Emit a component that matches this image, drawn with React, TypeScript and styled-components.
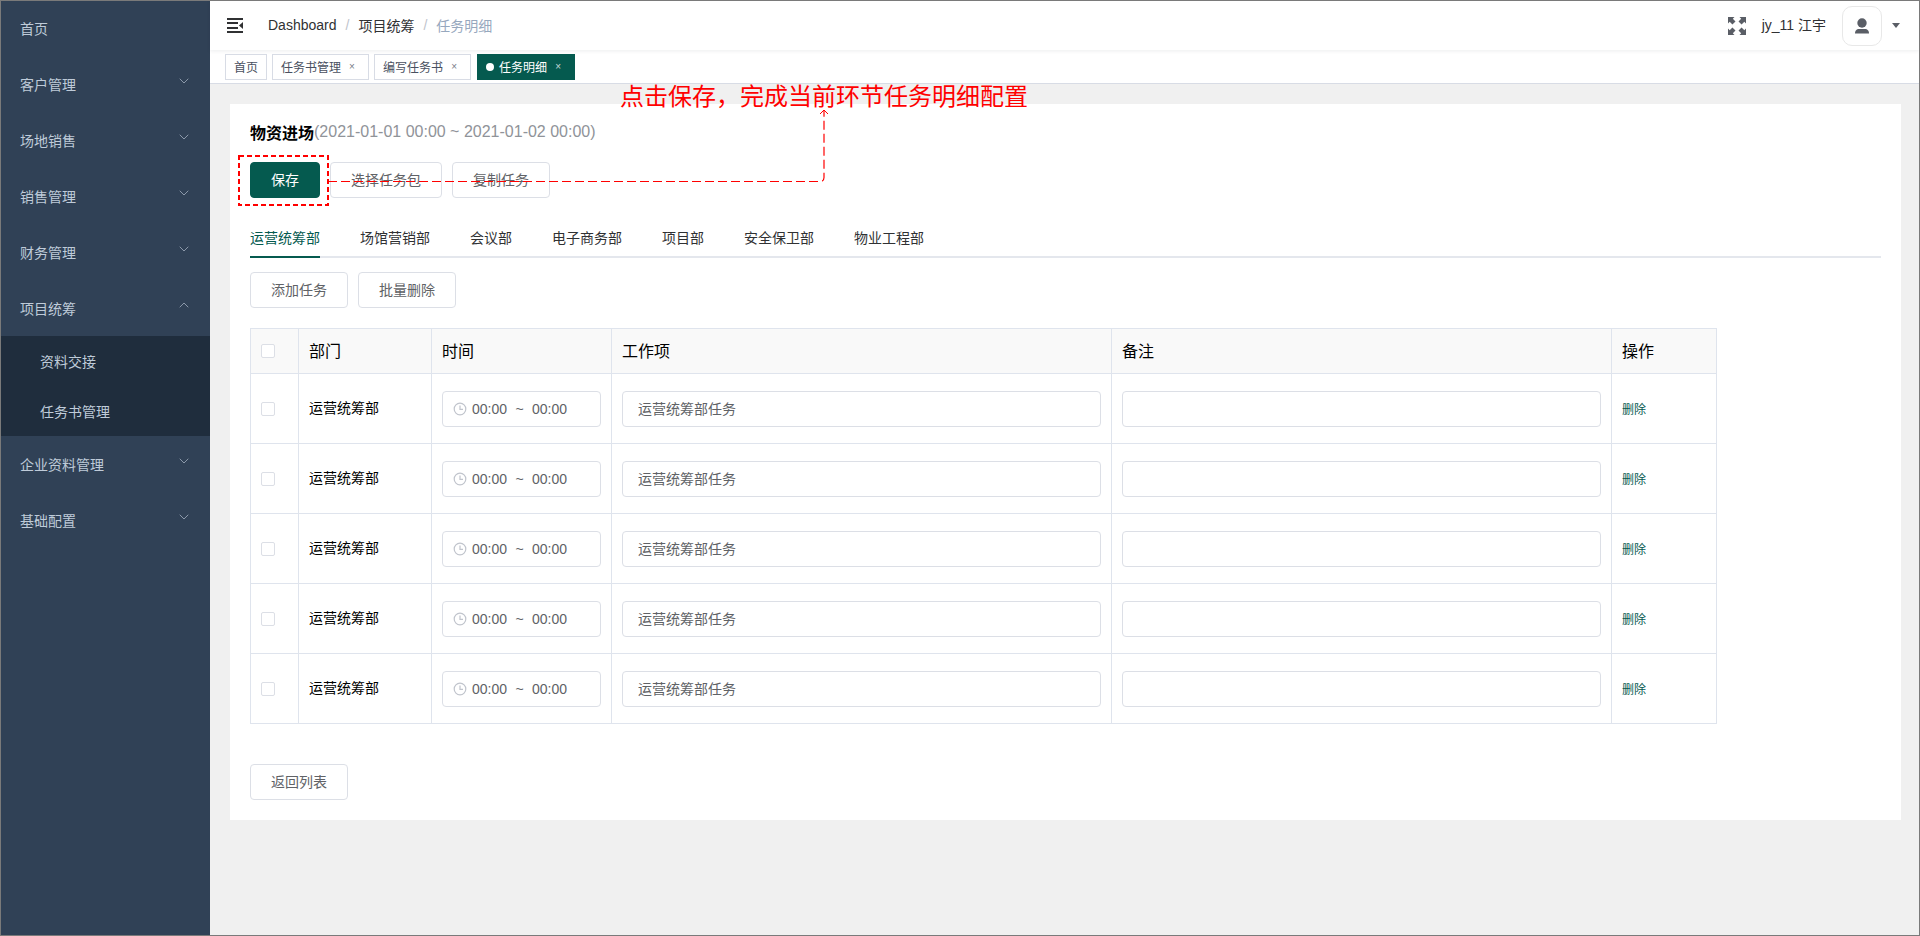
import styled, { createGlobalStyle } from 'styled-components';
import { ChevronDown, ChevronUp } from 'lucide-react';

const GREEN = '#055a4f';
const LINE = '#dfe4ed';

const GlobalStyle = createGlobalStyle`
  html, body {
    margin: 0;
    height: 100%;
    background: #f0f0f0;
  }
  * {
    box-sizing: border-box;
  }
  body, button, input {
    font-family: "Liberation Sans", "Noto Sans CJK SC", sans-serif;
  }
`;

const Page = styled.div`
  position: relative;
  display: flex;
  width: 1920px;
  height: 936px;
  overflow: hidden;
  border: 1px solid #7a7a7a;
`;

const Sidebar = styled.aside`
  flex: none;
  width: 209px;
  background: #304156;
  color: #bfcbd9;
  font-size: 14px;
`;

const MenuRow = styled.div`
  display: flex;
  align-items: center;
  justify-content: space-between;
  height: 56px;
  padding: 0 18px 0 19px;
  color: #bfcbd9;

  &:first-child {
    height: 55px;
    padding-bottom: 2px;
  }

  & svg {
    margin-top: -6px;
    color: #8c99aa;
  }
`;

const SubMenu = styled.div`
  background: #1f2d3d;
`;

const SubRow = styled.div`
  display: flex;
  align-items: center;
  height: 50px;
  padding-left: 39px;
`;

const Main = styled.main`
  flex: 1;
  min-width: 0;
  display: flex;
  flex-direction: column;
`;

const Navbar = styled.header`
  display: flex;
  align-items: center;
  flex: none;
  height: 49px;
  background: #fff;
  padding-left: 17px;
  box-shadow: 0 1px 4px rgba(0, 21, 41, 0.08);
  position: relative;
`;

const Crumbs = styled.nav`
  display: flex;
  align-items: center;
  margin-left: 23px;
  padding-bottom: 2px;
  font-size: 14px;
  color: #303133;
`;

const CrumbSep = styled.span`
  margin: 0 9px;
  color: #c0c4cc;
`;

const CrumbLast = styled.span`
  color: #97a8be;
`;

const NavRight = styled.div`
  display: flex;
  align-items: center;
  margin-left: auto;
  padding-right: 19px;
`;

const UserName = styled.span`
  margin: 0 16px;
  padding-bottom: 3px;
  font-size: 14px;
  color: #303133;
`;

const Avatar = styled.div`
  display: flex;
  align-items: center;
  justify-content: center;
  width: 40px;
  height: 40px;
  border: 1px solid #e8e8e8;
  border-radius: 10px;
`;

const Caret = styled.span`
  width: 0;
  height: 0;
  margin-left: 10px;
  border-left: 4px solid transparent;
  border-right: 4px solid transparent;
  border-top: 5px solid #5a5e66;
`;

const TagsBar = styled.div`
  display: flex;
  align-items: center;
  gap: 5px;
  flex: none;
  height: 34px;
  padding-left: 15px;
  background: #fff;
  border-bottom: 1px solid #d8dce5;
`;

const Tag = styled.div<{ $active?: boolean }>`
  display: flex;
  align-items: center;
  height: 26px;
  margin-left: ${(p) => (p.$active ? '1px' : '0')};
  padding: 0 8px;
  border: 1px solid ${(p) => (p.$active ? GREEN : '#d8dce5')};
  background: ${(p) => (p.$active ? GREEN : '#fff')};
  color: ${(p) => (p.$active ? '#fff' : '#495060')};
  font-size: 12px;
`;

const TagDot = styled.span`
  width: 8px;
  height: 8px;
  margin-right: 5px;
  border-radius: 50%;
  background: #fff;
`;

const TagClose = styled.span`
  width: 16px;
  margin-left: 3px;
  text-align: center;
  font-size: 10px;
  opacity: 0.75;
`;

const Content = styled.div`
  flex: 1;
  padding: 20px 18px 0 20px;
  background: #f0f0f0;
`;

const Card = styled.section`
  background: #fff;
  height: 716px;
  padding: 18px 20px 20px;
`;

const Title = styled.div`
  display: flex;
  align-items: center;
  height: 20px;
  font-size: 16px;
  color: #909399;
`;

const TitleName = styled.b`
  color: #000;
`;

const ButtonRow = styled.div`
  display: flex;
  gap: 10px;
`;

const ActionRow = styled(ButtonRow)`
  margin-top: 20px;
`;

const TaskRow = styled(ButtonRow)`
  margin-top: 14px;
`;

const Button = styled.button<{ $primary?: boolean }>`
  height: 36px;
  padding: 0 20px 2px;
  border: 1px solid ${(p) => (p.$primary ? GREEN : '#dcdfe6')};
  border-radius: 4px;
  background: ${(p) => (p.$primary ? GREEN : '#fff')};
  color: ${(p) => (p.$primary ? '#fff' : '#606266')};
  font-size: 14px;
`;

const Tabs = styled.div`
  display: flex;
  gap: 40px;
  margin-top: 20px;
  border-bottom: 2px solid #e4e7ed;
`;

const TabItem = styled.div<{ $active?: boolean }>`
  height: 40px;
  line-height: 40px;
  margin-bottom: -2px;
  font-size: 14px;
  color: ${(p) => (p.$active ? GREEN : '#303133')};
  border-bottom: 2px solid ${(p) => (p.$active ? GREEN : 'transparent')};
`;

const Table = styled.table`
  width: 1466px;
  margin-top: 20px;
  table-layout: fixed;
  border-collapse: collapse;
  color: #000;
`;

const Th = styled.th`
  height: 45px;
  padding: 0 10px;
  border: 1px solid ${LINE};
  background: #f9f9f9;
  text-align: left;
  font-size: 16px;
  font-weight: 400;
`;

const Td = styled.td`
  height: 70px;
  padding: 0 10px;
  border: 1px solid ${LINE};
  font-size: 14px;
`;

const CellLabel = styled.span`
  display: block;
  padding-bottom: 2px;
`;

const DeptLabel = styled(CellLabel)`
  padding-bottom: 4px;
`;

const Check = styled.span`
  display: block;
  width: 14px;
  height: 14px;
  border: 1px solid #dcdfe6;
  border-radius: 2px;
  background: #fff;
`;

const TimeBox = styled.div`
  display: flex;
  align-items: center;
  width: 159px;
  height: 36px;
  padding-left: 10px;
  border: 1px solid #dcdfe6;
  border-radius: 4px;
  color: #606266;
`;

const TimeValue = styled.span`
  margin-left: 5px;
`;

const Tilde = styled.span`
  width: 25px;
  text-align: center;
`;

const TextInput = styled.input`
  display: block;
  width: 479px;
  height: 36px;
  padding: 0 15px 2px;
  border: 1px solid #dcdfe6;
  border-radius: 4px;
  outline: none;
  font-size: 14px;
  color: #606266;
`;

const DeleteLink = styled.a`
  font-size: 12px;
  color: ${GREEN};
`;

const FooterRow = styled(ButtonRow)`
  margin-top: 40px;
`;

const Note = styled.div`
  position: absolute;
  left: 619px;
  top: 77px;
  font-size: 24px;
  line-height: 34px;
  color: #f00;
  font-family: "Noto Sans CJK SC", sans-serif;
  white-space: nowrap;
`;

const Overlay = styled.svg`
  position: absolute;
  left: -1px;
  top: -1px;
  pointer-events: none;
`;

const HamburgerIcon = () => (
  <svg width="18" height="16" viewBox="0 0 18 16" fill="#303133">
    <rect x="0" y="0" width="16" height="2" />
    <rect x="0" y="4" width="11" height="2" />
    <rect x="0" y="9" width="11" height="2" />
    <rect x="0" y="13" width="16" height="2" />
    <path d="M16 4v7l-4-3.5z" />
  </svg>
);

const FullscreenIcon = () => (
  <svg width="18" height="18" viewBox="0 0 18 18" fill="#5a5e66">
    <path d="M0 0h6.500L4.800 1.700l2.700 2.700-3.100 3.100-2.700-2.700L0 6.500z" />
    <path d="M18 0v6.500l-1.700-1.700-2.700 2.700-3.100-3.100 2.700-2.700L11.500 0z" />
    <path d="M0 18v-6.500l1.700 1.700 2.700-2.700 3.100 3.100-2.700 2.700 1.700 1.700z" />
    <path d="M18 18h-6.500l1.700-1.700-2.700-2.700 3.100-3.100 2.700 2.700 1.700-1.700z" />
  </svg>
);

const UserIcon = () => (
  <svg width="16" height="16" viewBox="0 0 16 16" fill="#5a5e66">
    <circle cx="8" cy="5" r="4.700" />
    <path d="M1 15.500c0-1.500.3-2.400.9-3.100.9-1 2-1.400 3.100-1.400h6c1.100 0 2.200.4 3.100 1.400.6.7.9 1.600.9 3.100z" />
  </svg>
);

const ClockIcon = () => (
  <svg width="14" height="14" viewBox="0 0 14 14" fill="none" stroke="#c0c4cc" strokeWidth="1.200">
    <circle cx="7" cy="7" r="5.800" />
    <path d="M7 3.500V7.300h3" />
  </svg>
);

const menuTop = ['客户管理', '场地销售', '销售管理', '财务管理'];
const tabs = ['运营统筹部', '场馆营销部', '会议部', '电子商务部', '项目部', '安全保卫部', '物业工程部'];
const rows = [0, 1, 2, 3, 4];

export default function App() {
  return (
    <>
      <GlobalStyle />
      <Page>
        <Sidebar>
          <MenuRow>首页</MenuRow>
          {menuTop.map((m) => (
            <MenuRow key={m}>
              {m}
              <ChevronDown size={16} strokeWidth={1.5} />
            </MenuRow>
          ))}
          <MenuRow>
            项目统筹
            <ChevronUp size={16} strokeWidth={1.5} />
          </MenuRow>
          <SubMenu>
            <SubRow>资料交接</SubRow>
            <SubRow>任务书管理</SubRow>
          </SubMenu>
          <MenuRow>
            企业资料管理
            <ChevronDown size={16} strokeWidth={1.5} />
          </MenuRow>
          <MenuRow>
            基础配置
            <ChevronDown size={16} strokeWidth={1.5} />
          </MenuRow>
        </Sidebar>
        <Main>
          <Navbar>
            <HamburgerIcon />
            <Crumbs>
              <span>Dashboard</span>
              <CrumbSep>/</CrumbSep>
              <span>项目统筹</span>
              <CrumbSep>/</CrumbSep>
              <CrumbLast>任务明细</CrumbLast>
            </Crumbs>
            <NavRight>
              <FullscreenIcon />
              <UserName>jy_11 江宇</UserName>
              <Avatar>
                <UserIcon />
              </Avatar>
              <Caret />
            </NavRight>
          </Navbar>
          <TagsBar>
            <Tag>首页</Tag>
            <Tag>
              任务书管理<TagClose>×</TagClose>
            </Tag>
            <Tag>
              编写任务书<TagClose>×</TagClose>
            </Tag>
            <Tag $active>
              <TagDot />
              任务明细<TagClose>×</TagClose>
            </Tag>
          </TagsBar>
          <Content>
            <Card>
              <Title>
                <TitleName>物资进场</TitleName>(2021-01-01 00:00 ~ 2021-01-02 00:00)
              </Title>
              <ActionRow>
                <Button $primary>保存</Button>
                <Button>选择任务包</Button>
                <Button>复制任务</Button>
              </ActionRow>
              <Tabs>
                {tabs.map((t, i) => (
                  <TabItem key={t} $active={i === 0}>
                    {t}
                  </TabItem>
                ))}
              </Tabs>
              <TaskRow>
                <Button>添加任务</Button>
                <Button>批量删除</Button>
              </TaskRow>
              <Table>
                <colgroup>
                  <col width="48" />
                  <col width="133" />
                  <col width="180" />
                  <col width="500" />
                  <col width="500" />
                  <col width="105" />
                </colgroup>
                <thead>
                  <tr>
                    <Th>
                      <Check />
                    </Th>
                    <Th>
                      <CellLabel>部门</CellLabel>
                    </Th>
                    <Th>
                      <CellLabel>时间</CellLabel>
                    </Th>
                    <Th>
                      <CellLabel>工作项</CellLabel>
                    </Th>
                    <Th>
                      <CellLabel>备注</CellLabel>
                    </Th>
                    <Th>
                      <CellLabel>操作</CellLabel>
                    </Th>
                  </tr>
                </thead>
                <tbody>
                  {rows.map((r) => (
                    <tr key={r}>
                      <Td>
                        <Check />
                      </Td>
                      <Td>
                        <DeptLabel>运营统筹部</DeptLabel>
                      </Td>
                      <Td>
                        <TimeBox>
                          <ClockIcon />
                          <TimeValue>00:00</TimeValue>
                          <Tilde>~</Tilde>
                          <span>00:00</span>
                        </TimeBox>
                      </Td>
                      <Td>
                        <TextInput readOnly value="运营统筹部任务" />
                      </Td>
                      <Td>
                        <TextInput readOnly value="" />
                      </Td>
                      <Td>
                        <DeleteLink>删除</DeleteLink>
                      </Td>
                    </tr>
                  ))}
                </tbody>
              </Table>
              <FooterRow>
                <Button>返回列表</Button>
              </FooterRow>
            </Card>
          </Content>
        </Main>
        <Note>点击保存，完成当前环节任务明细配置</Note>
        <Overlay width="1920" height="936" fill="none" stroke="#f00">
          <rect x="239" y="156" width="89" height="49" strokeWidth="2" strokeDasharray="5 3" />
          <path
            d="M328 181.500H820q4 0 4-4V111"
            strokeWidth="1.200"
            strokeDasharray="9 4"
          />
          <path d="M820 114l4-4 4 4" strokeWidth="1" />
        </Overlay>
      </Page>
    </>
  );
}
